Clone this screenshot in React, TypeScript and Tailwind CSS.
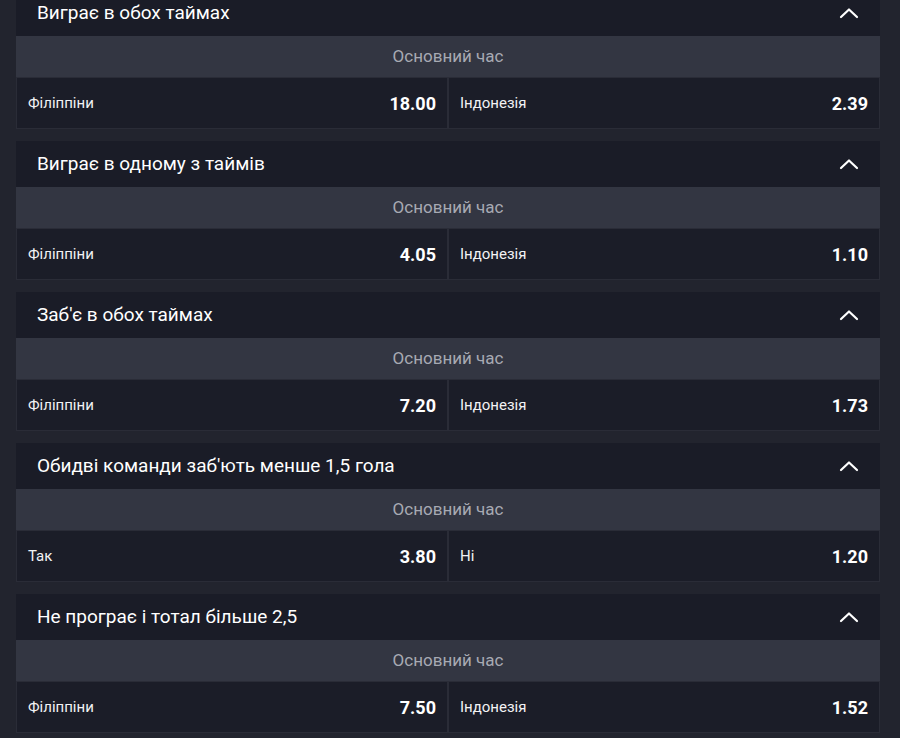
import React from "react";

interface Outcome {
  label: string;
  odd: string;
}

interface MarketProps {
  title: string;
  left: Outcome;
  right: Outcome;
}

const markets: MarketProps[] = [
  { title: "Виграє в обох таймах", left: { label: "Філіппіни", odd: "18.00" }, right: { label: "Індонезія", odd: "2.39" } },
  { title: "Виграє в одному з таймів", left: { label: "Філіппіни", odd: "4.05" }, right: { label: "Індонезія", odd: "1.10" } },
  { title: "Заб'є в обох таймах", left: { label: "Філіппіни", odd: "7.20" }, right: { label: "Індонезія", odd: "1.73" } },
  { title: "Обидві команди заб'ють менше 1,5 гола", left: { label: "Так", odd: "3.80" }, right: { label: "Ні", odd: "1.20" } },
  { title: "Не програє і тотал більше 2,5", left: { label: "Філіппіни", odd: "7.50" }, right: { label: "Індонезія", odd: "1.52" } },
];

const ChevronUp = () => (
  <svg width="20" height="12" viewBox="0 0 20 12" fill="none">
    <path d="M2 10 L10 2.5 L18 10" stroke="#ffffff" strokeWidth="2.2" strokeLinecap="round" strokeLinejoin="round" />
  </svg>
);

const OddCell = ({ label, odd }: Outcome) => (
  <div className="flex h-[52px] items-center justify-between border border-[#2a2c37] bg-[#1b1d28] pl-[11px] pr-[11px]">
    <span className="text-[15px] text-[#f2f2f4]">{label}</span>
    <span className="text-[18px] font-bold text-white">{odd}</span>
  </div>
);

const Market = ({ title, left, right }: MarketProps) => (
  <div className="mb-[12px]">
    <div className="flex h-[46px] items-center justify-between bg-[#1a1c27] pl-[21px] pr-[21px]">
      <span className="text-[19px] text-white">{title}</span>
      <ChevronUp />
    </div>
    <div className="flex h-[41px] items-center justify-center bg-[#333642] text-[17px] text-[#a7aab3]">
      Основний час
    </div>
    <div className="grid grid-cols-2">
      <OddCell {...left} />
      <OddCell {...right} />
    </div>
  </div>
);

export default function App() {
  return (
    <div
      className="h-[738px] overflow-hidden bg-[#22242e] pl-4 pr-5"
      style={{ fontFamily: "Roboto, 'Liberation Sans', sans-serif" }}
    >
      <div className="-mt-[10px]">
        {markets.map((m) => (
          <Market key={m.title} {...m} />
        ))}
      </div>
    </div>
  );
}
